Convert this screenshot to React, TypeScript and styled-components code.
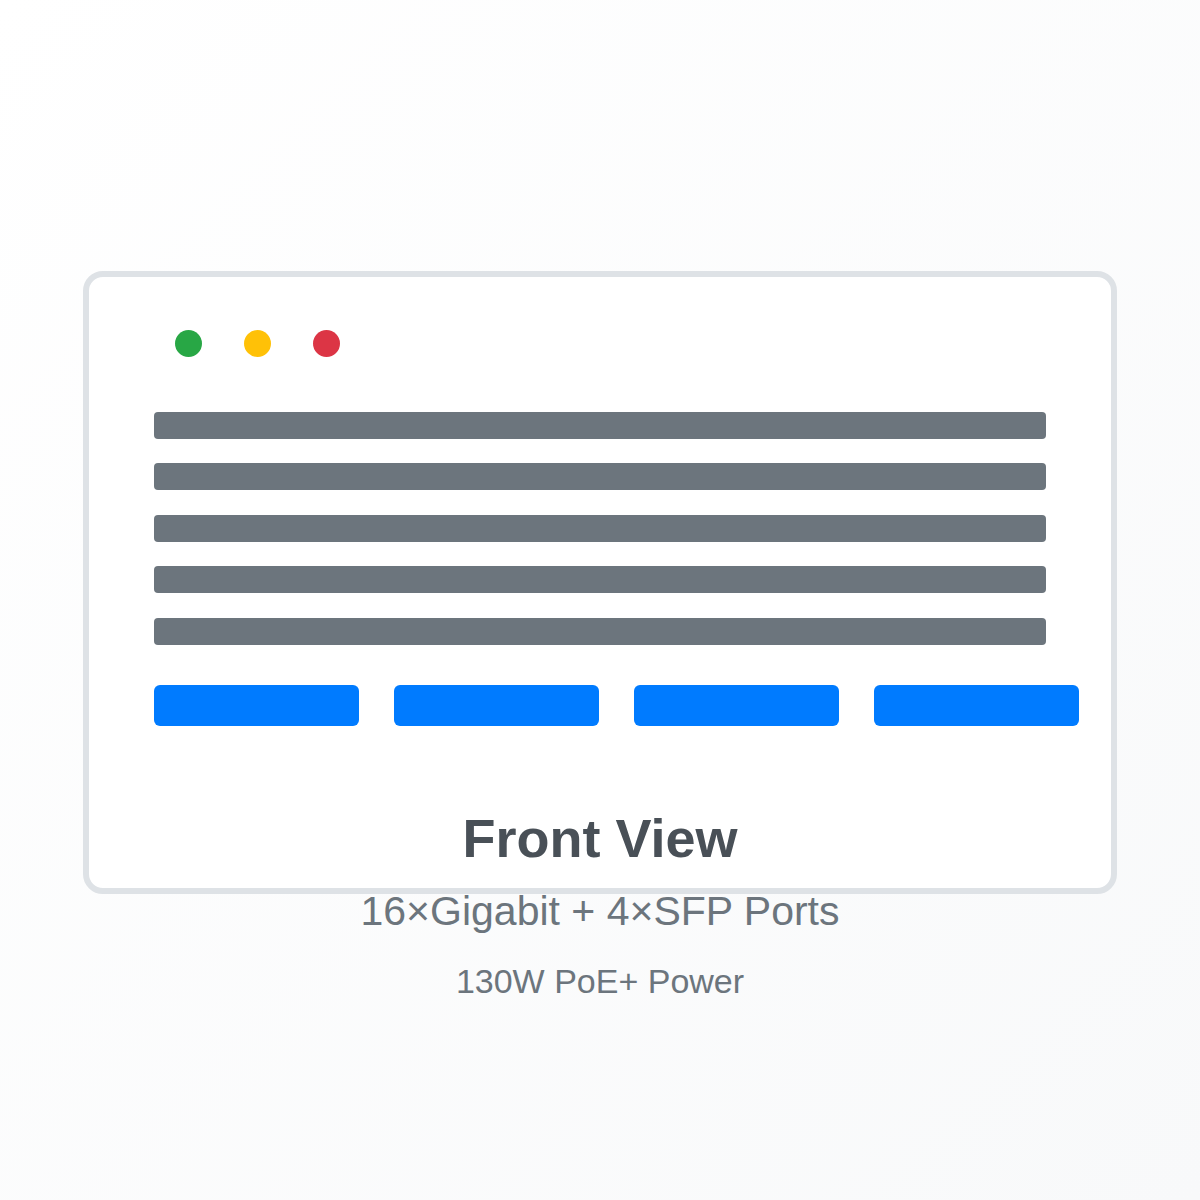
import styled, { createGlobalStyle } from "styled-components";

const Global = createGlobalStyle`
	html, body {
		margin: 0;
		padding: 0;
	}
	body {
		font-family: "Liberation Sans", Arial, sans-serif;
	}
`;

const Page = styled.div`
	width: 1200px;
	height: 1200px;
	box-sizing: border-box;
	padding-top: 271px;
	display: flex;
	flex-direction: column;
	align-items: center;
	background: linear-gradient(135deg, #ffffff 0%, #f8f9fa 100%);
	overflow: hidden;
`;

const Panel = styled.div`
	width: 1034px;
	box-sizing: border-box;
	border: 6px solid #dee2e6;
	border-radius: 20px;
	background: #ffffff;
	padding: 52.5px 0 17.6px 65px;
	display: flex;
	flex-direction: column;
`;

const Lights = styled.div`
	display: flex;
	gap: 42px;
	padding-left: 21px;
`;

const Light = styled.span<{ $color: string }>`
	width: 27px;
	height: 27px;
	border-radius: 50%;
	background: ${(p) => p.$color};
`;

const Rows = styled.div`
	display: flex;
	flex-direction: column;
	gap: 24.5px;
	margin-top: 55.2px;
`;

const Row = styled.div`
	width: 892px;
	height: 27px;
	border-radius: 4px;
	background: #6c757d;
`;

const Ports = styled.div`
	display: flex;
	gap: 35px;
	margin-top: 40.6px;
`;

const Port = styled.div`
	width: 205px;
	height: 41px;
	border-radius: 6px;
	background: #007bff;
`;

const Title = styled.h2`
	margin: 79.3px 0 0 -65px;
	font-size: 54px;
	line-height: 64.8px;
	font-weight: 700;
	color: #495057;
	text-align: center;
`;

const Spec = styled.p<{ $size: number; $line: number; $top: number }>`
	margin: ${(p) => p.$top}px 0 0;
	font-size: ${(p) => p.$size}px;
	line-height: ${(p) => p.$line}px;
	color: #6c757d;
	text-align: center;
`;

export default function App() {
	return (
		<>
			<Global />
			<Page>
				<Panel>
					<Lights>
						<Light $color="#28a745" />
						<Light $color="#ffc107" />
						<Light $color="#dc3545" />
					</Lights>
					<Rows>
						{[0, 1, 2, 3, 4].map((i) => (
							<Row key={i} />
						))}
					</Rows>
					<Ports>
						{[0, 1, 2, 3].map((i) => (
							<Port key={i} />
						))}
					</Ports>
					<Title>Front View</Title>
				</Panel>
				<Spec $size={41} $line={48} $top={-7.2}>
					16×Gigabit + 4×SFP Ports
				</Spec>
				<Spec $size={34} $line={40} $top={26.4}>
					130W PoE+ Power
				</Spec>
			</Page>
		</>
	);
}
